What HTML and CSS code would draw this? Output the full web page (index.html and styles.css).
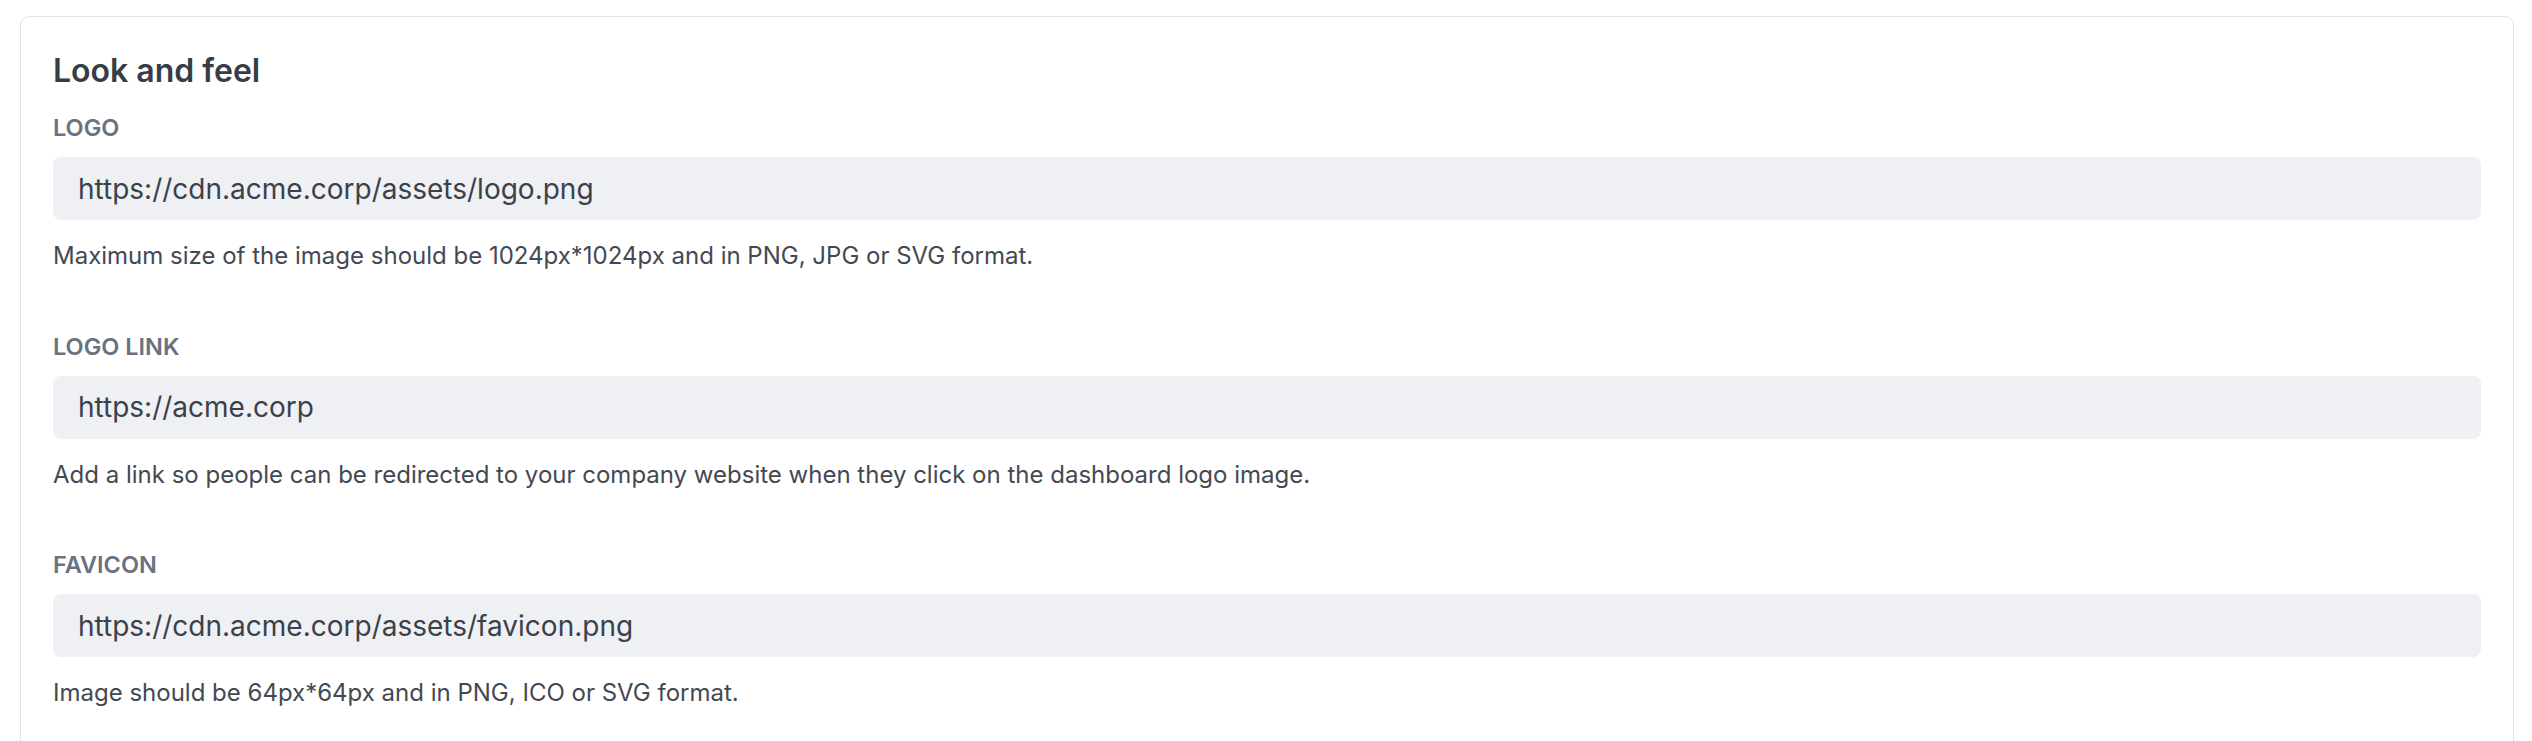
FILE: index.html
```html
<!DOCTYPE html>
<html lang="en">
<head>
<meta charset="utf-8">
<title>Look and feel</title>
<link rel="stylesheet" href="styles.css">
</head>
<body>
  <section class="card">
    <h2 class="card-title">Look and feel</h2>

    <div class="field">
      <div class="field-label">LOGO</div>
      <div class="field-input">https://cdn.acme.corp/assets/logo.png</div>
      <p class="field-help">Maximum size of the image should be 1024px*1024px and in PNG, JPG or SVG format.</p>
    </div>

    <div class="field">
      <div class="field-label">LOGO LINK</div>
      <div class="field-input">https://acme.corp</div>
      <p class="field-help">Add a link so people can be redirected to your company website when they click on the dashboard logo image.</p>
    </div>

    <div class="field">
      <div class="field-label">FAVICON</div>
      <div class="field-input">https://cdn.acme.corp/assets/favicon.png</div>
      <p class="field-help">Image should be 64px*64px and in PNG, ICO or SVG format.</p>
    </div>
  </section>
</body>
</html>
```

FILE: styles.css
```css
html, body {
  margin: 0;
  background: #ffffff;
}

body {
  padding: 16px 18px 0 20px;
  font-family: Inter, "Noto Sans", "Liberation Sans", sans-serif;
  color: #374151;
}

.card {
  border: 1px solid #e3e5e9;
  border-radius: 9px;
  padding: 36px 32px 32px;
  background: #ffffff;
}

.card-title {
  margin: 0 0 25px;
  font-size: 32px;
  line-height: 36px;
  font-weight: 600;
  color: #373d47;
}

.field {
  margin-bottom: 62.5px;
}

.field-label {
  font-size: 23.5px;
  line-height: 28px;
  font-weight: 600;
  color: #687282;
  margin-bottom: 15px;
}

.field-input {
  height: 63px;
  box-sizing: border-box;
  display: flex;
  align-items: center;
  padding: 0 25px;
  background: #eff0f3;
  border-radius: 8px;
  font-size: 28px;
  color: #3b414b;
}

.field-help {
  margin: 22px 0 0;
  font-size: 24px;
  line-height: 28px;
  color: #434953;
}
```
